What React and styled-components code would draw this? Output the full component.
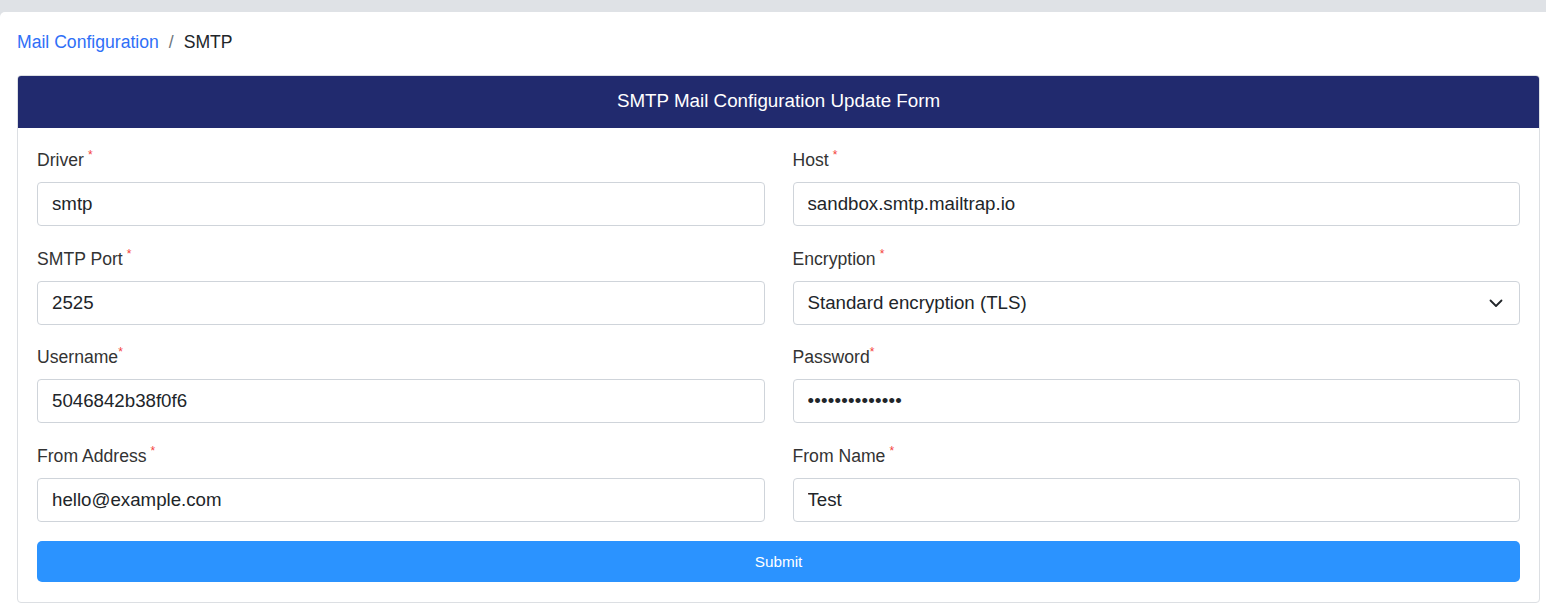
import React from 'react';
import styled, { createGlobalStyle } from 'styled-components';

const GlobalStyle = createGlobalStyle`
	html, body {
		margin: 0;
		padding: 0;
		background: #dfe2e6;
		font-family: "Liberation Sans", Arial, sans-serif;
	}
	* { box-sizing: border-box; }
`

const Page = styled.div`
	padding-top: 12px;
	min-height: 607px;
`

const Panel = styled.div`
	background: #fff;
	border-radius: 5px 0 0 0;
	padding: 18px 6px 4px 17px;
	min-height: 595px;
`

const Breadcrumb = styled.nav`
	display: flex;
	align-items: center;
	gap: 10px;
	font-size: 17.6px;
	line-height: 24px;
	color: #212529;
	margin-bottom: 21px;
`

const Crumb = styled.a`
	color: ${({ active }) => (active ? '#212529' : '#2f6ff7')};
	text-decoration: none;
`

const Sep = styled.span`
	color: #6c757d;
`

const Card = styled.div`
	border: 1px solid #dcdfe3;
	border-radius: 4px;
	overflow: hidden;
`

const CardHeader = styled.div`
	background: #212a6e;
	color: #fff;
	font-size: 18.8px;
	height: 52px;
	display: flex;
	align-items: center;
	justify-content: center;
	padding-bottom: 2px;
`

const CardBody = styled.form`
	padding: 20px 19px 20px 19px;
	display: grid;
	grid-template-columns: minmax(0, 1fr) minmax(0, 1fr);
	column-gap: 28px;
	row-gap: 20.7px;
`

const Field = styled.div`
	display: flex;
	flex-direction: column;
	gap: 10px;
`

const Label = styled.label`
	font-size: 17.6px;
	line-height: 24px;
	color: #333;
`

const Star = styled.sup`
	color: #f4433c;
	font-size: 12px;
	margin-left: ${({ tight }) => (tight ? '0' : '4px')};
	vertical-align: 7px;
	line-height: 0;
`

const Input = styled.input`
	height: 44px;
	width: 100%;
	border: 1px solid #cfd4da;
	border-radius: 4px;
	padding: 0 14px;
	font-family: inherit;
	font-size: 18.7px;
	color: #212529;
	background: #fff;
	outline: none;
	letter-spacing: ${({ type }) => (type === 'password' ? '0.2px' : 'normal')};
`

const SelectWrap = styled.div`
	position: relative;
`

const Select = styled.select`
	appearance: none;
	height: 44px;
	width: 100%;
	border: 1px solid #cfd4da;
	border-radius: 4px;
	padding: 0 14px;
	font-family: inherit;
	font-size: 18.7px;
	color: #212529;
	background: #fff;
	outline: none;
`

const Chevron = styled.svg`
	position: absolute;
	right: 17px;
	top: 17px;
	pointer-events: none;
`

const Submit = styled.button`
	grid-column: 1 / -1;
	margin-top: -1.5px;
	height: 41px;
	border: none;
	border-radius: 5px;
	background: #2b93ff;
	color: #fff;
	font-family: inherit;
	font-size: 15.3px;
	cursor: pointer;
`

const fields = [
	{ label: 'Driver', value: 'smtp' },
	{ label: 'Host', value: 'sandbox.smtp.mailtrap.io' },
	{ label: 'SMTP Port', value: '2525' },
	{ label: 'Encryption', select: true, value: 'Standard encryption (TLS)' },
	{ label: 'Username', value: '5046842b38f0f6', tight: true },
	{ label: 'Password', value: 'abcdefghijklmn', type: 'password', tight: true },
	{ label: 'From Address', value: 'hello@example.com' },
	{ label: 'From Name', value: 'Test' },
]

const App = () => (
	<>
		<GlobalStyle />
		<Page>
			<Panel>
				<Breadcrumb>
					<Crumb href="#">Mail Configuration</Crumb>
					<Sep>/</Sep>
					<Crumb active>SMTP</Crumb>
				</Breadcrumb>
				<Card>
					<CardHeader>SMTP Mail Configuration Update Form</CardHeader>
					<CardBody onSubmit={(e) => e.preventDefault()}>
						{fields.map((f) => (
							<Field key={f.label}>
								<Label>
									{f.label}
									<Star tight={f.tight}>*</Star>
								</Label>
								{f.select ? (
									<SelectWrap>
										<Select defaultValue="tls">
											<option value="tls">{f.value}</option>
											<option value="ssl">SSL</option>
										</Select>
										<Chevron width="14" height="10" viewBox="0 0 14 10" fill="none">
											<path d="M1.5 2.5 L7 8 L12.5 2.5" stroke="#212529" strokeWidth="1.8" strokeLinecap="round" strokeLinejoin="round" />
										</Chevron>
									</SelectWrap>
								) : (
									<Input type={f.type || 'text'} defaultValue={f.value} />
								)}
							</Field>
						))}
						<Submit type="submit">Submit</Submit>
					</CardBody>
				</Card>
			</Panel>
		</Page>
	</>
)

export default App
